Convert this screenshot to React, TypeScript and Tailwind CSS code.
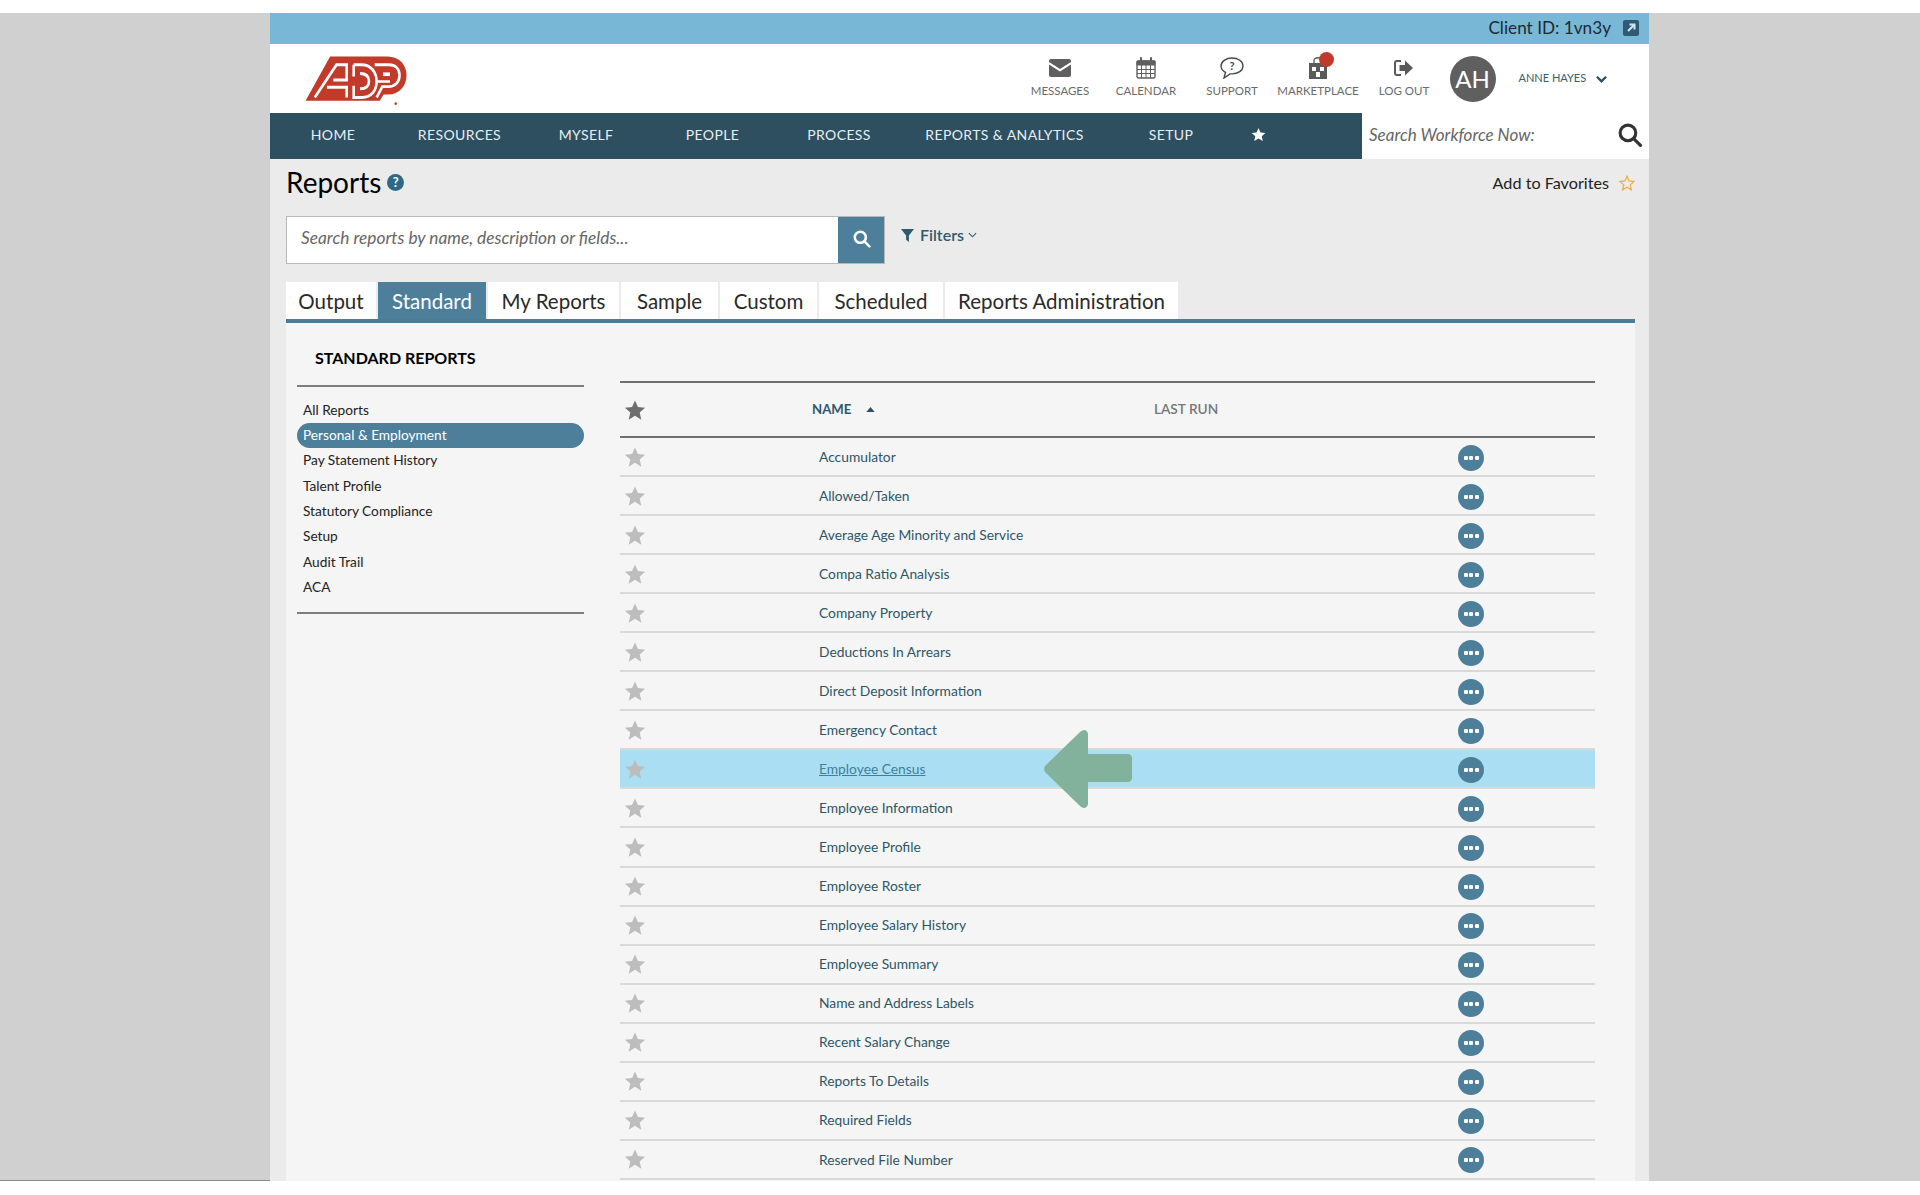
import React from "react";

const font = "font-['Lato','Liberation_Sans',sans-serif]";

function Star({ className }: { className: string }) {
  return (
    <svg viewBox="0 0 24 24" className={className} fill="currentColor">
      <path d="M12 1.500l3.200 7.200 7.800.8-5.900 5.200 1.800 7.800L12 18.400l-6.900 4.100 1.800-7.800L1 9.500l7.800-.8z" />
    </svg>
  );
}

function AdpLogo() {
  return (
    <svg viewBox="0 0 336 168" preserveAspectRatio="none" className="h-[61px] w-[107px]">
      <path fill="#c23b2a" d="M5 137L82 15H262C300 15 322 38 322 67C322 98 298 120 265 120H250L238 137Z" />
      <g fill="none" stroke="#fff" strokeWidth="8">
        <path d="M34 128L102 38H134V80H92" />
        <path d="M72 100H134V128" />
        <path d="M156 38V70M156 96V128H182C212 128 228 108 228 84C228 58 210 38 180 38H156" />
        <path d="M176 62C194 62 204 70 204 84C204 96 196 104 176 104" />
        <path d="M222 38H266C288 38 300 50 300 67C300 86 286 98 266 98H246L228 128" />
        <path d="M248 64H270" strokeWidth="10" />
        <path d="M228 84H270" strokeWidth="7" />
      </g>
      <circle cx="288" cy="145" r="4" fill="#c23b2a" />
    </svg>
  );
}

function Msg() {
  return (
    <svg viewBox="0 0 22 18" className="h-[18px] w-[22px]">
      <path fill="#5f5f5f" d="M2 0h18a2 2 0 0 1 2 2v1L11 10 0 3V2a2 2 0 0 1 2-2z" />
      <path fill="#5f5f5f" d="M0 5.500l11 7 11-7V16a2 2 0 0 1-2 2H2a2 2 0 0 1-2-2z" />
    </svg>
  );
}
function Cal() {
  return (
    <svg viewBox="0 0 20 22" className="h-[22px] w-[20px]" fill="none" stroke="#5f5f5f">
      <rect x="1" y="4" width="18" height="17" rx="1.500" strokeWidth="1.400" />
      <path d="M1 4h18v4H1z" fill="#5f5f5f" />
      <path d="M1 12.500h18M1 16.500h18M5.500 8v13M10 8v13M14.500 8v13" strokeWidth="1" />
      <path d="M5 1v5M15 1v5" strokeWidth="2" strokeLinecap="round" />
    </svg>
  );
}
function Sup() {
  return (
    <svg viewBox="0 0 24 22" className="h-[22px] w-[24px]">
      <path fill="none" stroke="#4a4a4a" strokeWidth="1.400" d="M12 1C6 1 1 4.500 1 9c0 2.800 2 5 4.500 6.300L4 21l6-4.100h2c6 0 11-3.400 11-8S18 1 12 1z" />
      <text x="12" y="13" fontSize="11" textAnchor="middle" fill="#4a4a4a" fontWeight="700" fontFamily="Lato">?</text>
    </svg>
  );
}
function Mkt() {
  return (
    <span className="relative block h-[22px] w-[18px]">
      <svg viewBox="0 0 18 22" className="h-[22px] w-[18px]">
        <path fill="#5a5a5a" d="M0 6h18v16H0z" />
        <path fill="none" stroke="#5a5a5a" strokeWidth="1.300" d="M5 6V3c0-3 8-3 8 0v3" />
        <path fill="#fff" d="M3 10h4v4H3zM11 10h4v4h-4zM7 15h4v5H7z" />
      </svg>
      <span className="absolute left-[10px] top-[-5px] h-[15px] w-[15px] rounded-full bg-[#c0392b]" />
    </span>
  );
}
function Out() {
  return (
    <svg viewBox="0 0 20 18" className="h-[18px] w-[20px]">
      <path fill="none" stroke="#5a5a5a" strokeWidth="2" d="M7 2H3a2 2 0 0 0-2 2v10a2 2 0 0 0 2 2h4" />
      <path fill="#5a5a5a" d="M5.500 6H11V1.500L19 9l-8 7.500V12H5.500z" />
    </svg>
  );
}

const tools: [string, React.ReactNode][] = [
  ["MESSAGES", <Msg />],
  ["CALENDAR", <Cal />],
  ["SUPPORT", <Sup />],
  ["MARKETPLACE", <Mkt />],
  ["LOG OUT", <Out />],
];

const nav: [string, string][] = [
  ["HOME", "w-[126px]"],
  ["RESOURCES", "w-[127px]"],
  ["MYSELF", "w-[126px]"],
  ["PEOPLE", "w-[127px]"],
  ["PROCESS", "w-[126px]"],
  ["REPORTS & ANALYTICS", "w-[205px]"],
  ["SETUP", "w-[128px]"],
];

const sideItems = ["All Reports", "Personal & Employment", "Pay Statement History", "Talent Profile", "Statutory Compliance", "Setup", "Audit Trail", "ACA"];

const rows = [
  "Accumulator", "Allowed/Taken", "Average Age Minority and Service", "Compa Ratio Analysis", "Company Property",
  "Deductions In Arrears", "Direct Deposit Information", "Emergency Contact", "Employee Census", "Employee Information",
  "Employee Profile", "Employee Roster", "Employee Salary History", "Employee Summary", "Name and Address Labels",
  "Recent Salary Change", "Reports To Details", "Required Fields", "Reserved File Number",
];

const tabs: [string, string][] = [
  ["Output", "w-[92px]"],
  ["Standard", "w-[110px]"],
  ["My Reports", "w-[133px]"],
  ["Sample", "w-[99px]"],
  ["Custom", "w-[99px]"],
  ["Scheduled", "w-[126px]"],
  ["Reports Administration", "w-[235px]"],
];

export default function App() {
  return (
    <div className={`h-[1195px] overflow-hidden bg-white pt-[13px] ${font}`}>
      <div className="flex h-[1168px] bg-[#d0d0d0]">
        <div className="h-[1168px] w-[270px] border-b border-[#8a8a8a]" />
        <div className="h-[1168px] w-[1379px] overflow-hidden bg-[#ebebeb]">
          <div className="flex h-[31px] items-center justify-end bg-[#78b8d6] pb-[1px] pr-[10px]">
            <span className="text-[17.200px] text-[#1d2a30]">Client ID: 1vn3y</span>
            <svg viewBox="0 0 16 16" className="ml-[12px] h-[16px] w-[16px]">
              <rect width="16" height="16" rx="2" fill="#2e5a73" />
              <path d="M5 11l6-6M6.500 4.500H11.500V9.500" stroke="#cfe6f0" strokeWidth="2" fill="none" />
            </svg>
          </div>

          <div className="flex h-[69px] items-center bg-white">
            <div className="ml-[34px] mt-[5px]"><AdpLogo /></div>
            <div className="ml-[606px] flex pb-[6px]">
              {tools.map(([label, icon]) => (
                <div key={label} className="flex w-[86px] flex-col items-center">
                  <div className="flex h-[30px] items-center">{icon}</div>
                  <span className="mt-[1px] text-[11.500px] leading-[14px] text-[#6a6a6a]">{label}</span>
                </div>
              ))}
            </div>
            <div className="ml-[2.500px] flex h-[46px] w-[46px] items-center justify-center rounded-full bg-[#5f5f5f] text-[24px] text-white">AH</div>
            <span className="ml-[23px] text-[11px] text-[#35606f]">ANNE HAYES</span>
            <svg viewBox="0 0 12 8" className="ml-[10px] h-[8px] w-[11px]" fill="none" stroke="#2e4f60" strokeWidth="2.500">
              <path d="M1 1.500l5 5 5-5" />
            </svg>
          </div>

          <div className="flex h-[46px]">
            <div className="flex w-[1092px] items-center bg-[#2e4f60] pb-[4px] text-[14px] tracking-[0.4px] text-[#e8eef1]">
              {nav.map(([n, w]) => (
                <span key={n} className={`${w} text-center`}>{n}</span>
              ))}
              <Star className="ml-[16px] h-[15px] w-[15px] text-white" />
            </div>
            <div className="flex flex-1 items-center bg-white pb-[4px] pl-[7px] pr-[7px]">
              <span className="flex-1 pt-[2px] text-[17px] italic text-[#666]">Search Workforce Now:</span>
              <svg viewBox="0 0 24 24" className="h-[25px] w-[25px]" fill="none" stroke="#333" strokeWidth="3">
                <circle cx="10.500" cy="10.500" r="7.500" />
                <path d="M16 16l6.500 6.500" strokeLinecap="round" />
              </svg>
            </div>
          </div>

          <div className="pl-[16px] pr-[14px]">
            <div className="flex h-[50px] items-center justify-between pb-[2px]">
              <div className="flex items-center pb-[2px]">
                <span className="text-[28px] leading-none text-black">Reports</span>
                <span className="ml-[6px] flex h-[17px] w-[17px] items-center justify-center rounded-full bg-[#2e6a85] text-[13px] font-bold leading-none text-white">?</span>
              </div>
              <div className="flex items-center">
                <span className="text-[16.200px] text-[#222]">Add to Favorites</span>
                <svg viewBox="0 0 24 24" className="ml-[10px] h-[16px] w-[16px]" fill="none" stroke="#e9b04a" strokeWidth="2">
                  <path d="M12 2l3 7 7.500.8-5.600 5 1.600 7.400L12 18.400l-6.500 3.800 1.600-7.400-5.600-5L9 9z" />
                </svg>
              </div>
            </div>

            <div className="mt-[7px] flex items-start">
              <div className="flex h-[48px] w-[599px] border border-[#b9b9b9] bg-white">
                <span className="flex flex-1 items-center pb-[5px] pl-[14px] text-[17.300px] italic text-[#666]">Search reports by name, description or fields...</span>
                <span className="flex w-[46px] items-center justify-center bg-[#4d7f9a] pb-[3px]">
                  <svg viewBox="0 0 24 24" className="h-[19px] w-[19px]" fill="none" stroke="#fff" strokeWidth="3.200">
                    <circle cx="10.500" cy="10.500" r="7" />
                    <path d="M16 16l6 6" strokeLinecap="round" />
                  </svg>
                </span>
              </div>
              <div className="ml-[16px] mt-[7px] flex items-center text-[16px] text-[#2e5a6e]">
                <svg viewBox="0 0 14 14" className="mr-[6px] h-[13px] w-[13px]" fill="#2e5a6e"><path d="M0 0h14L8.500 7v7l-3-2.500V7z" /></svg>
                <span className="font-semibold">Filters</span>
                <svg viewBox="0 0 10 6" className="ml-[4px] h-[6px] w-[9px]" fill="none" stroke="#2e5a6e" strokeWidth="1.200"><path d="M1 1l4 4 4-4" /></svg>
              </div>
            </div>

            <div className="mt-[18px] flex h-[37px]">
              {tabs.map(([t, w]) => (
                <div key={t} className={`${w} flex items-center justify-center border-r-2 border-[#ebebeb] pt-[1px] text-[20.500px] ${t === "Standard" ? "bg-[#4d7f9a] text-white" : "bg-white text-[#2a2a2a]"}`}>
                  {t}
                </div>
              ))}
            </div>
            <div className="h-[4px] bg-[#4a7c96]" />

            <div className="flex h-[900px] bg-[#f5f5f5]">
              <div className="ml-[11px] w-[287px]">
                <div className="flex h-[64px] items-center border-b-2 border-[#7d7d7d] pl-[18px] pt-[8px] text-[16px] font-bold text-black">STANDARD REPORTS</div>
                <div className="border-b-2 border-[#7d7d7d] pb-[12px] pt-[10.500px]">
                  {sideItems.map((s) => (
                    <div key={s} className={`flex h-[25.300px] items-center rounded-full pl-[6px] text-[13.700px] ${s === "Personal & Employment" ? "bg-[#4d7f9a] text-white" : "text-[#222]"}`}>{s}</div>
                  ))}
                </div>
              </div>
              <div className="ml-[36px] mt-[58px] w-[975px]">
                <div className="flex h-[57px] items-center border-y-2 border-[#6f6f6f]">
                  <Star className="ml-[4px] h-[22px] w-[22px] text-[#6f6f6f]" />
                  <span className="ml-[166px] text-[13.200px] font-bold text-[#2e5a6e]">NAME</span>
                  <svg viewBox="0 0 10 6" className="ml-[15px] h-[5px] w-[9px]" fill="#2e4f60"><path d="M5 0l5 6H0z" /></svg>
                  <span className="ml-[278.500px] text-[13.700px] font-semibold text-[#777]">LAST RUN</span>
                </div>
                {rows.map((r) => {
                  const hi = r === "Employee Census";
                  return (
                    <div key={r} className={`relative flex h-[39.050px] items-center border-b-2 border-[#d9d9d9] ${hi ? "bg-[#aadff3]" : ""}`}>
                      <Star className="ml-[4px] h-[22px] w-[22px] text-[#bdbdbd]" />
                      <span className={`ml-[173px] w-[639px] pt-[1px] text-[13.800px] ${hi ? "text-[#3f7f9a] underline" : "text-[#2e5566]"}`}>{r}</span>
                      <span className="mt-[2px] flex h-[26px] w-[26px] items-center justify-center gap-[1.500px] rounded-full bg-[#4d7f9a]">
                        <i className="h-[4px] w-[4px] rounded-[1px] bg-white" />
                        <i className="h-[4px] w-[4px] rounded-[1px] bg-white" />
                        <i className="h-[4px] w-[4px] rounded-[1px] bg-white" />
                      </span>
                      {hi && (
                        <svg viewBox="0 0 88 78" className="absolute left-[424px] top-[-20px] h-[78px] w-[88px]">
                          <path
                            fill="#82b29c"
                            d="M40 0c2 0 4 2 4 4v20h40c2 0 4 2 4 4v20c0 2-2 4-4 4H44v22c0 2-2 4-4 4-1 0-3-1-4-2L1 42c-1-2-1-4 0-6L36 2c1-1 3-2 4-2z"
                          />
                        </svg>
                      )}
                    </div>
                  );
                })}
              </div>
            </div>
          </div>
        </div>
      </div>
    </div>
  );
}
